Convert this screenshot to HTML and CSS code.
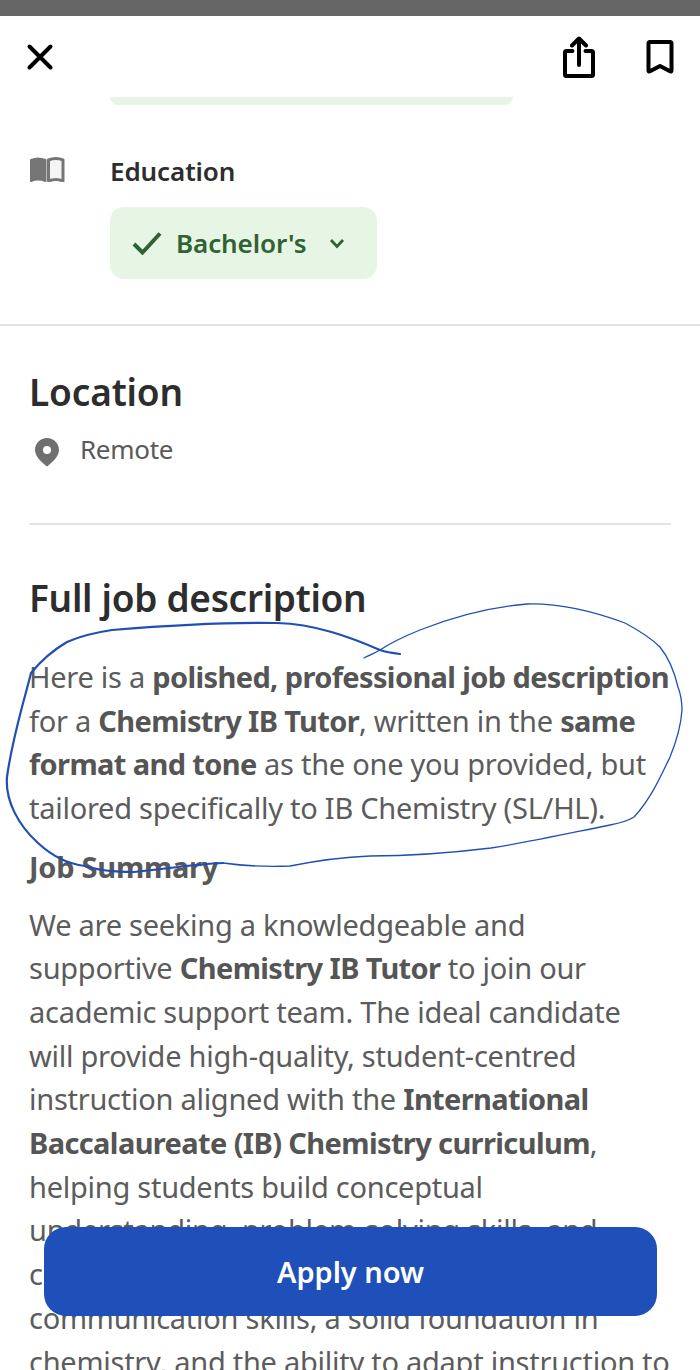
FILE: index.html
```html
<!doctype html>
<html lang="en">
<head>
  <title>Job details</title>
  <meta charset="utf-8">
  <link rel="stylesheet" href="styles.css">
</head>
<body>
<div class="status-strip"></div>

<header class="top-nav">
  <svg class="icon-close" width="28" height="28" viewBox="0 0 28 28"><path d="M3.500 3.500L24.500 24.500M24.500 3.500L3.500 24.500" fill="none" stroke="#000" stroke-width="4" stroke-linecap="round"/></svg>
  <div class="top-actions">
    <svg width="32" height="42" viewBox="0 0 32 42"><path d="M9.500 15H3.500A1.500 1.500 0 0 0 2 16.500V38.500A1.500 1.500 0 0 0 3.500 40H28.500A1.500 1.500 0 0 0 30 38.500V16.500A1.500 1.500 0 0 0 28.500 15H22.500M16 29V3M9 9.500L16 2.500L23 9.500" fill="none" stroke="#000" stroke-width="4" stroke-linecap="round" stroke-linejoin="round"/></svg>
    <svg width="28" height="34" viewBox="0 0 28 34"><path d="M4 2H24A1.500 1.500 0 0 1 25.500 3.500V30.500Q25.500 32 24 31.300L14 26L4 31.300Q2.500 32 2.500 30.500V3.500A1.500 1.500 0 0 1 4 2Z" fill="none" stroke="#000" stroke-width="4" stroke-linejoin="round"/></svg>
  </div>
</header>

<main>
  <section class="qualifications">
    <div class="pill-sliver"></div>
    <div class="qual-row">
      <svg class="icon-book" width="36" height="25" viewBox="0 0 36 25"><path d="M2 3Q9 0 16.500 3V24Q9 21 2 24Z" fill="#767676" stroke="#767676" stroke-width="2" stroke-linejoin="round"/><path d="M19.500 3Q27 0 34 3V24Q27 21 19.500 24Z" fill="#f4f4f4" stroke="#767676" stroke-width="3" stroke-linejoin="round"/></svg>
      <div class="qual-body">
        <h3 class="qual-title">Education</h3>
        <div class="match-pill">
          <svg width="30" height="24" viewBox="0 0 30 24"><path d="M2 13L10.500 21.500L28 2.500" fill="none" stroke="#2f6234" stroke-width="4"/></svg>
          <span>Bachelor's</span>
          <svg class="chev" width="16" height="11" viewBox="0 0 16 11"><path d="M2 2L8 8.500L14 2" fill="none" stroke="#2f6234" stroke-width="2.800"/></svg>
        </div>
      </div>
    </div>
  </section>

  <section class="location">
    <h2>Location</h2>
    <div class="loc-row">
      <svg width="26" height="30" viewBox="0 0 26 30"><path fill-rule="evenodd" d="M13 1C6.400 1 1 6.200 1 12.800C1 20 9 26.500 13 29.500C17 26.500 25 20 25 12.800C25 6.200 19.600 1 13 1ZM13 9A4 4 0 1 1 13 17A4 4 0 1 1 13 9Z" fill="#6f6f6f"/></svg>
      <span>Remote</span>
    </div>
  </section>

  <section class="description">
    <h2>Full job description</h2>
    <p>Here is a <b>polished, professional job description</b><br>for a <b>Chemistry IB Tutor</b>, written in the <b>same</b><br><b>format and tone</b> as the one you provided, but<br>tailored specifically to IB Chemistry (SL/HL).</p>
    <h4>Job Summary</h4>
    <p>We are seeking a knowledgeable and<br>supportive <b>Chemistry IB Tutor</b> to join our<br>academic support team. The ideal candidate<br>will provide high-quality, student-centred<br>instruction aligned with the <b>International</b><br><b>Baccalaureate (IB) Chemistry curriculum</b>,<br>helping students build conceptual<br>understanding, problem-solving skills, and<br>confidence. You should have strong<br>communication skills, a solid foundation in<br>chemistry, and the ability to adapt instruction to</p>
  </section>
</main>

<button class="apply-btn">Apply now</button>

<svg class="scribble" width="700" height="1370" viewBox="0 0 700 1370">
  <path d="M400 654C392 653 386 652 380 650C350 637 315 624 277 623C220 622 160 626 112 630C92 633 78 637 67 642C50 652 40 662 31 673C28 685 25 696 22 707C16 730 10 755 7 777C5 800 18 825 38 843C52 856 68 864 85 866C100 871 117 872 134 872C165 869 195 864 223 863" fill="none" stroke="#1f4fb4" stroke-width="2.200" stroke-linecap="round"/>
  <path d="M223 863C245 866 268 867 290 866C320 860 345 857 370 856C410 856 450 853 491 848C530 842 570 833 610 825C620 823 628 821 634 817C650 800 660 778 670 757C677 740 681 725 682 710C682 700 681 695 678 687C674 670 668 657 660 647C650 637 638 630 625 623C595 612 560 603 527 604C490 607 450 618 420 630C405 636 392 642 380 650C375 653 370 655 364 658" fill="none" stroke="#1f4fb4" stroke-width="1.300" stroke-linecap="round"/>
</svg>
</body>
</html>
```

FILE: styles.css
```css
html {
  box-sizing: border-box;
  font-family: "Noto Sans", "Open Sans", sans-serif;
}
*, *:before, *:after {
  box-sizing: inherit;
}
html, body {
  margin: 0;
  height: 1370px;
  overflow: hidden;
  background-color: #fff;
}
.status-strip {
  height: 16px;
  background-color: #666;
}
.top-nav {
  height: 81px;
  padding: 8px 26px 0 26px;
  display: flex;
  justify-content: space-between;
  align-items: flex-start;
}
.icon-close {
  margin-top: 19px;
}
.top-actions {
  display: flex;
  align-items: flex-start;
  gap: 51px;
  margin-top: 12px;
}
.top-actions svg:last-child {
  margin-top: 4px;
}
.pill-sliver {
  width: 403px;
  height: 8px;
  margin-left: 110px;
  background-color: #e7f6e4;
  border-radius: 0 0 12px 12px;
}
.qualifications {
  height: 229px;
  border-bottom: 2px solid #e4e4e4;
}
.qual-row {
  display: flex;
  gap: 45px;
  padding: 47px 0 0 29px;
}
.icon-book {
  margin-top: 5px;
}
.qual-title {
  margin: 0 0 17px;
  font-size: 26px;
  line-height: 38px;
  font-weight: 600;
  letter-spacing: -0.1px;
  color: #2d2d2d;
}
.match-pill {
  width: 267px;
  height: 72px;
  padding-left: 22px;
  display: flex;
  align-items: center;
  background-color: #e7f6e4;
  border-radius: 14px;
  font-size: 26px;
  font-weight: 600;
  letter-spacing: -0.1px;
  color: #2f6234;
}
.match-pill span {
  margin-left: 14px;
}
.chev {
  margin-left: 23px;
}
.location {
  margin: 0 29px;
  height: 199px;
  padding-top: 41px;
  border-bottom: 2px solid #e4e4e4;
}
h2 {
  margin: 0;
  font-size: 37px;
  line-height: 50px;
  font-weight: 600;
  letter-spacing: -0.15px;
  color: #2d2d2d;
}
.loc-row {
  display: flex;
  align-items: center;
  gap: 20px;
  margin-top: 14px;
  padding-left: 5px;
  font-size: 26px;
  letter-spacing: -0.3px;
  color: #595959;
}
.loc-row svg {
  margin-top: 5px;
}
.description {
  margin: 0 29px;
  padding-top: 48px;
}
.description h2 {
  margin-bottom: 32px;
  letter-spacing: -0.3px;
}
.description p {
  margin: 0;
  font-size: 29px;
  line-height: 43.700px;
  letter-spacing: -0.26px;
  color: #5c5c5c;
  white-space: nowrap;
}
.description b {
  font-weight: 700;
  letter-spacing: -0.62px;
  color: #555;
}
.description h4 {
  margin: 15px 0 14px;
  font-size: 29px;
  line-height: 43.700px;
  font-weight: 700;
  letter-spacing: -0.25px;
  color: #595959;
}
.apply-btn {
  position: absolute;
  left: 44px;
  top: 1227px;
  width: 613px;
  height: 89px;
  border: 0;
  border-radius: 22px;
  background-color: #1f4fb8;
  color: #fff;
  font-family: inherit;
  font-size: 29px;
  font-weight: 600;
  letter-spacing: -0.05px;
}
.scribble {
  position: absolute;
  left: 0;
  top: 0;
  pointer-events: none;
}
```
